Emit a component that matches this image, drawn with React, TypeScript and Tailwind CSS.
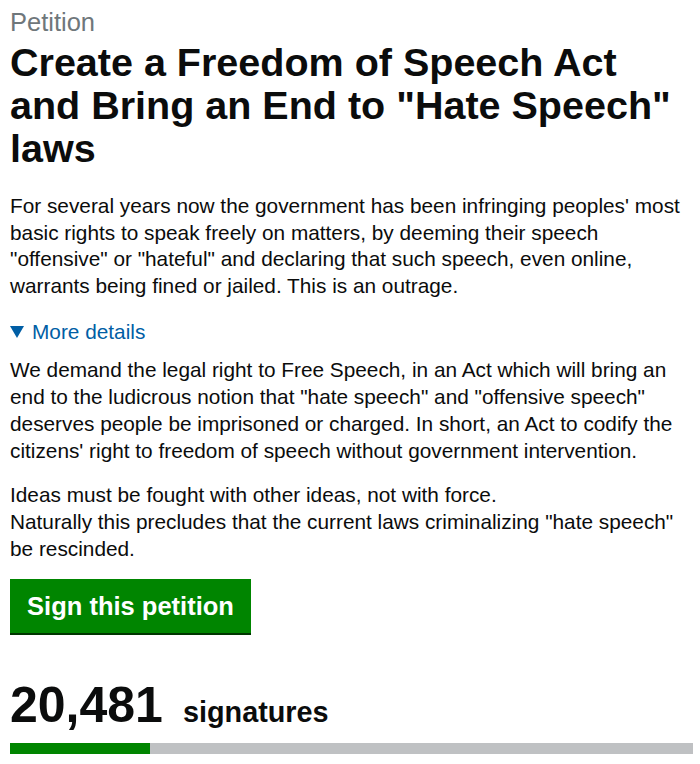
export default function App() {
  return (
    <div className="min-h-[764px] bg-white pl-[10px] pr-[7px] pt-[7px] text-[#0b0c0c] [font-family:'Liberation_Sans',Arial,sans-serif]">
      <p className="text-[25.5px] leading-[30px] text-[#6f777b]">Petition</p>
      <h1 className="mt-[4px] text-[39.5px] font-bold leading-[43px]">
        Create a Freedom of Speech Act and Bring an End to "Hate Speech" laws
      </h1>

      <p className="mt-[23px] text-[20.8px] leading-[26.5px]">
        For several years now the government has been infringing peoples' most basic rights to speak freely on
        matters, by deeming their speech "offensive" or "hateful" and declaring that such speech, even online,
        warrants being fined or jailed. This is an outrage.
      </p>

      <details open className="mt-[20px]">
        <summary className="flex cursor-pointer list-none items-center gap-[8px] text-[20.8px] leading-[26px] text-[#005ea5] [&::-webkit-details-marker]:hidden">
          <svg width="14" height="12" viewBox="0 0 14 12" className="shrink-0">
            <path d="M0 0H14L7 12Z" fill="#005ea5" />
          </svg>
          <span>More details</span>
        </summary>
        <div className="mt-[11px] text-[20.8px] leading-[27px]">
          <p>
            We demand the legal right to Free Speech, in an Act which will bring an end to the ludicrous notion that
            "hate speech" and "offensive speech" deserves people be imprisoned or charged. In short, an Act to
            codify the citizens' right to freedom of speech without government intervention.
          </p>
          <p className="mt-[17px]">
            Ideas must be fought with other ideas, not with force.
            <br />
            Naturally this precludes that the current laws criminalizing "hate speech" be rescinded.
          </p>
        </div>
      </details>

      <button className="mt-[17px] h-[54px] w-[241px] bg-[#008500] text-[25.5px] font-bold text-white shadow-[0_2px_0_#003600]">
        Sign this petition
      </button>

      <div className="mt-[46px] flex items-baseline gap-[20px]">
        <span className="text-[50px] font-bold leading-[52px]">20,481</span>
        <span className="text-[28.8px] font-bold">signatures</span>
      </div>

      <div className="mt-[9px] h-[11px] w-full bg-[#bfc1c3]">
        <div className="h-full bg-[#008500]" style={{ width: `${(140 / 684) * 100}%` }} />
      </div>
    </div>
  );
}
